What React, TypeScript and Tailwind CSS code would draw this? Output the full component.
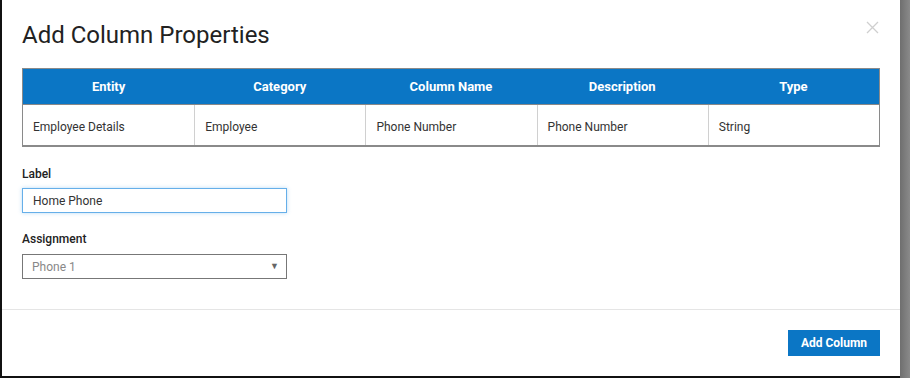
import React from 'react';

const columns = ['Entity', 'Category', 'Column Name', 'Description', 'Type'];
const row = ['Employee Details', 'Employee', 'Phone Number', 'Phone Number', 'String'];

export default function App() {
  return (
    <div className="w-[910px] h-[378px] flex bg-[#777] font-['Roboto',sans-serif] overflow-hidden">
      {/* Modal */}
      <div className="w-[900px] h-[378px] flex flex-col bg-white border-l-2 border-b-2 border-[#111] shrink-0">
        {/* Header */}
        <div className="flex items-start justify-between pl-5 pr-[21px] pt-[20px] h-[68px]">
          <h1 className="text-[24px] leading-[30px] text-[#222]">Add Column Properties</h1>
          <svg width="13" height="13" viewBox="0 0 13 13" className="mt-[1px]">
            <path d="M1 1 L12 12 M12 1 L1 12" stroke="#cfcfcf" strokeWidth="1.3" />
          </svg>
        </div>

        {/* Body */}
        <div className="px-5 flex flex-col">
          <div className="w-[858px] border border-[#8a8a8a] border-b-2">
            <div className="grid grid-cols-5 h-[36px] bg-[#0b76c5] border-b border-[#888]">
              {columns.map((c) => (
                <div key={c} className="flex items-center justify-center pt-[1px] text-white text-[13px] font-bold">
                  {c}
                </div>
              ))}
            </div>
            <div className="grid grid-cols-5 h-[40px]">
              {row.map((c, i) => (
                <div
                  key={i}
                  className={`flex items-center pl-[10px] pt-[3px] text-[12px] text-[#333] ${i > 0 ? 'border-l border-[#d0d0d0]' : ''}`}
                >
                  {c}
                </div>
              ))}
            </div>
          </div>

          <label className="mt-[19px] text-[12px] font-medium text-[#222] leading-[16px]">Label</label>
          <div className="mt-[6px] w-[265px] h-[25px] border border-[#66afe9] shadow-[0_0_4px_rgba(102,175,233,0.45)] flex items-center pl-[10px] text-[12px] text-[#333]">
            Home Phone
          </div>

          <label className="mt-[18px] text-[12px] font-medium text-[#222] leading-[16px]">Assignment</label>
          <div className="mt-[7px] w-[265px] h-[25px] border border-[#777] flex items-center justify-between pl-[9px] pr-[7px] text-[12px] text-[#888]">
            <span>Phone 1</span>
            <span className="text-[9px] text-[#666]">▼</span>
          </div>
        </div>

        {/* Footer */}
        <div className="mt-[30px] border-t border-[#e5e5e5] flex justify-end pr-[20px] pt-[20px]">
          <button className="w-[92px] h-[26px] bg-[#0b76c5] text-white text-[12px] font-bold">Add Column</button>
        </div>
      </div>
      <div className="flex-1 bg-gradient-to-r from-[#6f6f6f] to-[#8a8a8a]" />
    </div>
  );
}
